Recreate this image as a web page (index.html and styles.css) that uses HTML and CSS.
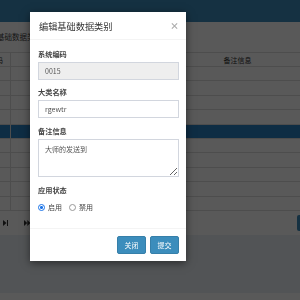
FILE: index.html
```html
<!DOCTYPE html>
<html lang="zh-CN">

<head>
  <meta charset="UTF-8" />
  <title>基础数据类别</title>
  <link rel="stylesheet" href="styles.css">
</head>

<body>
  <div class="page">
    <div class="topbar"></div>
    <div class="box">
      <div class="box-title">基础数据类别</div>
      <div class="grid">
        <div class="grid-row grid-head">
          <span>编码</span>
          <span>大类名称</span>
          <span>备注信息</span>
        </div>
        <div class="grid-row"><span></span><span></span><span></span></div>
        <div class="grid-row"><span></span><span></span><span></span></div>
        <div class="grid-row"><span></span><span></span><span></span></div>
        <div class="grid-row"><span></span><span></span><span></span></div>
        <div class="grid-row selected"><span></span><span></span><span></span></div>
        <div class="grid-row"><span></span><span></span><span></span></div>
        <div class="grid-row"><span></span><span></span><span></span></div>
        <div class="grid-row"><span></span><span></span><span></span></div>
        <div class="grid-row"><span></span><span></span><span></span></div>
        <div class="grid-row"><span></span><span></span><span></span></div>
      </div>
      <div class="pager">
        <svg class="pager-icon" width="5" height="6" viewBox="0 0 5 6">
          <path d="M0 0 L3.5 3 L0 6 Z" fill="#333" />
          <rect x="4" y="0" width="1" height="6" fill="#333" />
        </svg>
        <svg class="pager-icon" width="8" height="6" viewBox="0 0 8 6">
          <path d="M0 0 L3.2 3 L0 6 Z" fill="#333" />
          <path d="M3.3 0 L6.5 3 L3.3 6 Z" fill="#333" />
          <rect x="7" y="0" width="1" height="6" fill="#333" />
        </svg>
        <div class="pager-btn"></div>
      </div>
    </div>
    <div class="main-rest"></div>
    <div class="main-footer"></div>
  </div>

  <div class="backdrop"></div>

  <div class="modal">
    <div class="modal-header">
      <span class="modal-title">编辑基础数据类别</span>
      <span class="close">×</span>
    </div>
    <div class="modal-body">
      <div class="form-group">
        <label>系统编码</label>
        <input type="text" class="form-control" value="0015" disabled />
      </div>
      <div class="form-group">
        <label>大类名称</label>
        <input type="text" class="form-control" value="rgewtr" />
      </div>
      <div class="form-group">
        <label>备注信息</label>
        <textarea class="form-control">大师的发送到</textarea>
      </div>
      <div class="form-group last">
        <label>应用状态</label>
        <div class="radio-row">
          <input type="radio" name="status" checked />
          <span class="radio-text">启用</span>
          <input type="radio" name="status" />
          <span class="radio-text">禁用</span>
        </div>
      </div>
    </div>
    <div class="modal-footer">
      <button class="btn">关闭</button>
      <button class="btn">提交</button>
    </div>
  </div>
</body>

</html>
```

FILE: styles.css
```css
* {
  box-sizing: border-box;
}

body {
  margin: 0;
  width: 300px;
  height: 300px;
  overflow: hidden;
  background-color: #ecf0f5;
  font-family: "Noto Sans CJK SC", "Liberation Sans", sans-serif;
  color: #333;
}

/* page behind the dialog */

.page {
  height: 300px;
  display: flex;
  flex-direction: column;
}

.topbar {
  height: 22px;
  background-color: #3c8dbc;
}

.box {
  background-color: #fff;
}

.box-title {
  height: 30px;
  padding-top: 10px;
  margin-left: -3px;
  font-size: 7.5px;
  line-height: 10px;
  color: #444;
}

.grid-row {
  display: grid;
  grid-template-columns: 28px 164px 1fr;
  height: 14.4px;
  margin-left: -18px;
  border-bottom: 1px solid #ddd;
}

.grid-row span {
  border-left: 1px solid #ddd;
  text-align: center;
}

.grid-row span:first-child {
  border-left: none;
}

.grid-head {
  height: 15px;
  border-top: 1px solid #ddd;
  font-size: 7px;
  line-height: 14px;
  color: #333;
}

.grid-row.selected {
  background-color: #2a82c4;
}

.pager {
  height: 24px;
  display: flex;
  align-items: center;
  padding-left: 3px;
  gap: 16px;
}

.pager-btn {
  margin-left: auto;
  width: 6px;
  height: 16px;
  margin-right: -3px;
  background-color: #3c8dbc;
  border-radius: 2px;
}

.main-rest {
  flex: 1;
}

.main-footer {
  height: 7px;
  background-color: #fff;
}

.backdrop {
  position: fixed;
  inset: 0;
  background-color: rgba(0, 0, 0, 0.65);
}

/* dialog */

.modal {
  position: absolute;
  left: 30px;
  top: 12px;
  width: 156px;
  background-color: #fff;
  box-shadow: 0 2px 8px rgba(0, 0, 0, 0.5);
}

.modal-header {
  height: 28px;
  padding: 0 7px 0 9px;
  display: flex;
  align-items: center;
  justify-content: space-between;
  border-bottom: 1px solid #f4f4f4;
}

.modal-title {
  font-size: 9.2px;
  color: #333;
}

.close {
  font-size: 9px;
  line-height: 1;
  color: #aaa;
  font-weight: bold;
}

.modal-body {
  padding: 9px 7px 15px 8px;
}

.form-group {
  margin-bottom: 7px;
}

.form-group+.form-group {
  margin-bottom: 8px;
}

.form-group.last {
  margin-bottom: 0;
}

.form-group label {
  display: block;
  font-size: 7.2px;
  line-height: 10px;
  font-weight: bold;
  color: #444;
  margin-bottom: 3px;
}

.form-control {
  display: block;
  width: 100%;
  height: 18px;
  padding: 0 6px;
  border: 1px solid #d2d6de;
  border-radius: 0;
  font-family: inherit;
  font-size: 7px;
  color: #555;
  background-color: #fff;
}

.form-control[disabled] {
  background-color: #eee;
}

textarea.form-control {
  height: 38px;
  padding: 4px 6px;
  resize: vertical;
}

.radio-row {
  display: flex;
  align-items: center;
  height: 12px;
  margin-top: 6px;
}

.radio-row input {
  appearance: none;
  width: 7px;
  height: 7px;
  margin: 0 3px 0 0;
  border: 1px solid #999;
  border-radius: 50%;
  background-color: #fff;
}

.radio-row input:checked {
  border: 1.5px solid #1a73e8;
  background: radial-gradient(circle, #1a73e8 0 1.3px, #fff 1.6px);
}

.radio-text {
  font-size: 7px;
  color: #444;
  margin-right: 7px;
}

.modal-footer {
  display: flex;
  justify-content: flex-end;
  gap: 4px;
  padding: 7px;
  border-top: 1px solid #f4f4f4;
}

.btn {
  width: 29px;
  height: 18px;
  padding: 0;
  border: 1px solid #367fa9;
  border-radius: 2px;
  background-color: #3c8dbc;
  color: #fff;
  font-family: inherit;
  font-size: 7px;
  cursor: pointer;
}
```
